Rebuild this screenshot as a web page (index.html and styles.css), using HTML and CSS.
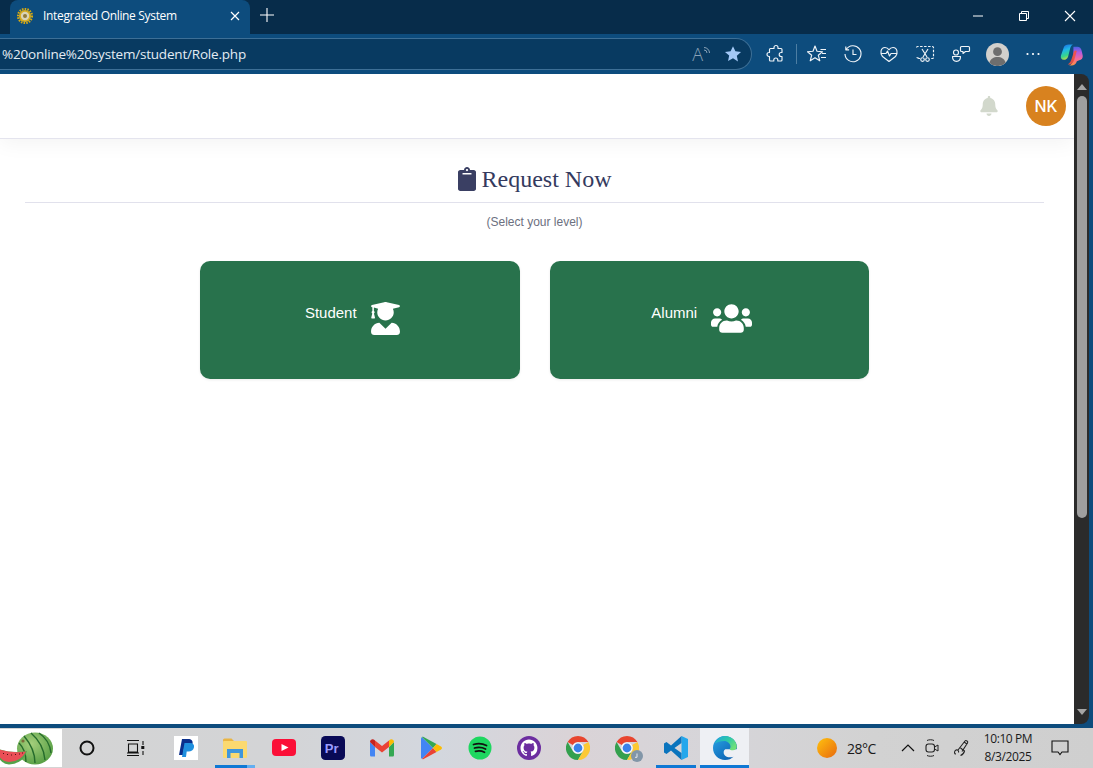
FILE: index.html
```html
<!DOCTYPE html>
<html lang="en">
<head>
<meta charset="utf-8">
<title>Integrated Online System</title>
<link rel="stylesheet" href="styles.css">
</head>
<body>
<div class="tabbar">
  <div class="tab">
    <svg class="favicon" viewBox="0 0 16 16"><circle cx="8" cy="8" r="7" fill="none" stroke="#d6a913" stroke-width="2.2" stroke-dasharray="1.6 1.1"/><circle cx="8" cy="8" r="6" fill="#d8ad20"/><circle cx="8" cy="8" r="4.2" fill="#d9d3b8"/><circle cx="8" cy="8" r="2" fill="#8f7a3c"/></svg>
    <span class="tab-title">Integrated Online System</span>
    <svg class="tab-close" viewBox="0 0 10 10"><path d="M1 1l8 8M9 1l-8 8" stroke="#fff" stroke-width="1.2" fill="none"/></svg>
  </div>
  <svg class="new-tab" viewBox="0 0 14 14"><path d="M7 0v14M0 7h14" stroke="#fff" stroke-width="1.1" fill="none"/></svg>
  <div class="win-controls">
    <svg class="win-btn" viewBox="0 0 46 16"><path d="M18 8h10" stroke="#fff" stroke-width="1"/></svg>
    <svg class="win-btn" viewBox="0 0 46 16"><path d="M18.5 5.5h7v7h-7zM20.5 5.5v-2h7v7h-2" stroke="#fff" stroke-width="1" fill="none"/></svg>
    <svg class="win-btn" viewBox="0 0 46 16"><path d="M18 3l10 10M28 3l-10 10" stroke="#fff" stroke-width="1.1" fill="none"/></svg>
  </div>
</div>

<div class="toolbar">
  <div class="address">
    <span class="url">%20online%20system/student/Role.php</span>
    <span class="read-aloud">A<svg class="waves" viewBox="0 0 8 10"><path d="M1 3.500a3 3 0 0 1 3 3M1 1a5.500 5.500 0 0 1 5.500 5.500" stroke="#8aa3b8" stroke-width="1" fill="none"/></svg></span>
    <svg class="star" viewBox="0 0 24 24"><path d="M12 1.5l3.2 6.9 7.5.9-5.6 5.1 1.5 7.5L12 17.7l-6.6 3.7 1.5-7.5L1.300 9.300l7.500-.9z" fill="#a3c8f7"/></svg>
  </div>
  <div class="tool"><svg viewBox="0 0 20 20"><path d="M8 3.500a2 2 0 0 1 4 0V4.500h3a1 1 0 0 1 1 1v3h-.8a2 2 0 0 0 0 4h.8V16a1 1 0 0 1-1 1h-3.200v-1a2 2 0 0 0-4 0v1H4.500a1 1 0 0 1-1-1v-3.500H3a2 2 0 0 1 0-4h.5v-3a1 1 0 0 1 1-1H8z" class="ln"/></svg></div>
  <span class="tool-sep"></span>
  <div class="tool"><svg viewBox="0 0 20 20"><path d="M8 2l2 5.200 5.500.5-4.200 3.500 1.500 5.600L8 13.800l-4.800 3 1.500-5.600L.5 7.700 6 7.200zM13.500 5.500h5.500M15 9.500h4M14 13.500h5" class="ln"/></svg></div>
  <div class="tool"><svg viewBox="0 0 20 20"><path d="M3.200 5.500A8 8 0 1 1 2 10M2.800 2.500v3.300h3.300M10 5.500V10.500h3.500" class="ln"/></svg></div>
  <div class="tool"><svg viewBox="0 0 20 20"><path d="M3.500 12.500C.8 9.500 1.500 3.500 6 3.500c2 0 3.200 1 4 2.300.8-1.300 2-2.300 4-2.300 4.500 0 5.200 6 2.500 9L10 17.500zM1.500 9.500H7l1.500-2.500 2 5 1.500-2.500h6.500" class="ln"/></svg></div>
  <div class="tool"><svg viewBox="0 0 20 20"><path d="M1.500 3.500a1 1 0 0 1 1-1h15a1 1 0 0 1 1 1v10a1 1 0 0 1-1 1h-2.500M5 14.500H2.500a1 1 0 0 1-1-1z" class="ln dash"/><path d="M7 5l5 8M13 5l-5 8" class="ln"/><circle cx="7.500" cy="15.500" r="1.800" class="ln"/><circle cx="12.500" cy="15.500" r="1.800" class="ln"/></svg></div>
  <div class="tool"><svg viewBox="0 0 20 20"><circle cx="5" cy="8.500" r="2.500" class="ln"/><path d="M1.500 12.500h8c0 3-1.500 4.800-4 4.800s-4-1.800-4-4.800zM9.500 3.500a1 1 0 0 1 1-1h7a1 1 0 0 1 1 1v3a1 1 0 0 1-1 1h-3l-2.500 2V7.500h-1.500a1 1 0 0 1-1-1z" class="ln"/></svg></div>
  <div class="tool"><svg class="profile" viewBox="0 0 24 24"><circle cx="12" cy="12" r="12" fill="#d2d0cc"/><circle cx="12" cy="9" r="4.600" fill="#6e6e6e"/><path d="M3.500 20.500c1-4 4.500-6 8.500-6s7.500 2 8.500 6a12 12 0 0 1-17 0z" fill="#6e6e6e"/></svg></div>
  <div class="tool"><svg viewBox="0 0 20 20"><circle cx="4.500" cy="10" r="1.100" fill="#fff"/><circle cx="10" cy="10" r="1.100" fill="#fff"/><circle cx="15.500" cy="10" r="1.100" fill="#fff"/></svg></div>
  <div class="tool copilot"><svg viewBox="0 0 24 24"><defs><linearGradient id="cpa" x1=".3" y1="0" x2=".6" y2="1"><stop offset="0" stop-color="#1d6fe0"/><stop offset=".35" stop-color="#1fb8e8"/><stop offset=".7" stop-color="#38d68a"/><stop offset="1" stop-color="#e6d93c"/></linearGradient><linearGradient id="cpb" x1=".5" y1="0" x2=".5" y2="1"><stop offset="0" stop-color="#4a63e6"/><stop offset=".3" stop-color="#b45be0"/><stop offset=".65" stop-color="#f56a9a"/><stop offset="1" stop-color="#f9923c"/></linearGradient></defs><path d="M9 1.500h4.500c-1.700.8-2.500 2.500-3 4.500L8.500 14c-.7 2.500-2.500 3.500-4.500 3.500C1.500 17.500.3 15.500 1 13L4 4.500C4.700 2.500 6.500 1.500 9 1.500z" fill="url(#cpa)"/><path d="M14 4h4c2.500 0 4 1.500 4.600 4l1 4.500c.7 3-1 5-3.500 5.500l-2.500 1c-1 3-3 4.500-5.500 4.500H9.500c2.500-.8 3.700-3 4.500-6z" fill="url(#cpb)"/><path d="M14.500 9c.8-1.500 2.500-1.500 3-.5-.8 2-1.500 6-2.500 9-.8 2.500-2.500 4.500-5 5H8c2.500-1.500 3.700-4 4.500-7z" fill="#f4523e" opacity=".9"/></svg></div>
</div>

<div class="viewport">
  <div class="page">
    <header class="site-header">
      <svg class="bell" viewBox="0 0 448 512"><path d="M224 512c35.32 0 63.97-28.65 63.97-64H160.03c0 35.35 28.65 64 63.97 64zm215.39-149.71c-19.32-20.76-55.47-51.99-55.47-154.29 0-77.7-54.48-139.9-127.94-155.16V32c0-17.67-14.32-32-31.98-32s-31.98 14.33-31.98 32v20.84C118.56 68.1 64.08 130.3 64.08 208c0 102.3-36.15 133.53-55.47 154.29-6 6.45-8.66 14.16-8.61 21.71.11 16.4 12.98 32 32.1 32h383.8c19.12 0 32-15.6 32.1-32 .05-7.55-2.61-15.27-8.61-21.71z"/></svg>
      <div class="avatar">NK</div>
    </header>
    <main class="content">
      <h1 class="title">
        <svg class="title-icon" viewBox="0 0 384 512"><path d="M384 112v352c0 26.51-21.49 48-48 48H48c-26.51 0-48-21.49-48-48V112c0-26.51 21.49-48 48-48h80c0-35.29 28.71-64 64-64s64 28.710 64 64h80c26.51 0 48 21.49 48 48zM192 40c-13.255 0-24 10.745-24 24s10.745 24 24 24 24-10.745 24-24-10.745-24-24-24m96 114v-20a6 6 0 0 0-6-6H102a6 6 0 0 0-6 6v20a6 6 0 0 0 6 6h180a6 6 0 0 0 6-6z"/></svg>
        <span>Request Now</span>
      </h1>
      <hr class="rule">
      <p class="subtitle">(Select your level)</p>
      <div class="choices">
        <a class="choice">
          <span class="choice-label">Student</span>
          <svg class="choice-icon grad" viewBox="0 0 448 512"><path d="M319.4 320.6L224 416l-95.4-95.4C57.1 323.7 0 382.2 0 454.4v9.6c0 26.5 21.5 48 48 48h352c26.5 0 48-21.5 48-48v-9.6c0-72.2-57.1-130.7-128.6-133.8zM13.6 79.8l6.4 1.5v58.4c-7 4.2-12 11.5-12 20.3 0 8.4 4.6 15.4 11.1 19.7L3.5 242c-1.7 6.9 2.1 14 7.6 14h41.8c5.5 0 9.3-7.1 7.6-14l-15.6-62.3C51.4 175.4 56 168.4 56 160c0-8.8-5-16.1-12-20.3V87.1l66 15.9c-8.6 17.2-14 36.4-14 57 0 70.7 57.3 128 128 128s128-57.3 128-128c0-20.6-5.3-39.8-14-57l96.3-23.2c18.2-4.4 18.2-27.1 0-31.5l-190.4-46c-13-3.1-26.7-3.1-39.7 0L13.6 48.2c-18.1 4.4-18.1 27.2 0 31.6z"/></svg>
        </a>
        <a class="choice">
          <span class="choice-label">Alumni</span>
          <svg class="choice-icon users" viewBox="0 0 640 512"><path d="M96 224c35.3 0 64-28.7 64-64s-28.7-64-64-64-64 28.7-64 64 28.7 64 64 64zm448 0c35.3 0 64-28.7 64-64s-28.7-64-64-64-64 28.7-64 64 28.7 64 64 64zm32 32h-64c-17.6 0-33.5 7.1-45.1 18.6 40.3 22.1 68.9 62 75.1 109.4h66c17.7 0 32-14.3 32-32v-32c0-35.3-28.7-64-64-64zm-256 0c61.9 0 112-50.1 112-112S381.9 32 320 32 208 82.1 208 144s50.1 112 112 112zm76.8 32h-8.3c-20.8 10-43.9 16-68.5 16s-47.6-6-68.5-16h-8.3C179.6 288 128 339.6 128 403.2V432c0 26.5 21.5 48 48 48h288c26.5 0 48-21.5 48-48v-28.8c0-63.6-51.6-115.2-115.2-115.2zm-223.7-13.4C161.5 263.1 145.6 256 128 256H64c-35.3 0-64 28.7-64 64v32c0 17.7 14.3 32 32 32h65.9c6.3-47.4 34.900-87.3 75.2-109.4z"/></svg>
        </a>
      </div>
    </main>
  </div>
  <div class="scrollbar">
    <span class="arrow-up"></span>
    <span class="thumb"></span>
    <span class="arrow-down"></span>
  </div>
</div>

<footer class="taskbar">
  <div class="thumbnail">
    <svg viewBox="0 0 62 38"><defs><radialGradient id="wm" cx=".4" cy=".35" r=".75"><stop offset="0" stop-color="#a5cf7c"/><stop offset="1" stop-color="#4f9a3f"/></radialGradient></defs><ellipse cx="35" cy="19.500" rx="18" ry="16" fill="url(#wm)"/><path d="M24 7c6 7 11 17 11 27M31 4c7 6 13 15 14 27M39 4c6 4 11 11 12 20M19 14c5 5 7 13 7 19" stroke="#256b2c" stroke-width="1.400" fill="none"/><circle cx="23" cy="12" r="1.600" fill="#7d6a3a"/><path d="M-4 19Q11 25 27 22Q23 35 9 35.500Q-2 35 -4 19z" fill="#54a24a"/><path d="M-4 19.500Q11 25 26 22.500Q21 32.500 9 33Q-1 32.500 -4 19.500z" fill="#ea4f56"/><path d="M3 24.500h1M7 25.500h1M11 26h1M15 25.500h1M19 25h1M22 24h1" stroke="#4a1616" stroke-width="1.200"/></svg>
  </div>
  <div class="task"><svg class="i20" viewBox="0 0 20 20"><circle cx="10" cy="10" r="6.500" fill="none" stroke="#111" stroke-width="2"/></svg></div>
  <div class="task"><svg class="i20 taskview" viewBox="0 0 20 20"><path d="M2 2.500h12M2 17.500h12M3.500 6h9v8h-9zM2 15h12M18 3v4M18 13v4" stroke="#111" stroke-width="1.100" fill="none"/><rect x="16.300" y="8" width="3" height="3" fill="#111"/></svg></div>
  <div class="task paypal-slot"><svg class="i24" viewBox="0 0 24 24"><rect width="24" height="24" fill="#fff"/><path d="M8 3h6c3.500 0 5 2 4.500 4.500C18 11 15.500 12.500 12.500 12.500H10L9 19H5z" fill="#0a2f8c"/><path d="M10.500 7h5.500c3 0 4.500 1.800 4 4.200-.6 3-2.800 4.300-5.500 4.300h-1.800L12 21H8z" fill="#1f8fde"/></svg></div>
  <div class="task running"><svg class="i24" viewBox="0 0 24 24"><path d="M0 4a1.500 1.500 0 0 1 1.500-1.500h7L11 5h12v2H0z" fill="#eab543"/><rect y="5" width="24" height="17" rx="1" fill="#fbd970"/><path d="M4 22v-9h16v9h-3.500v-5h-9v5z" fill="#3f96dc"/></svg></div>
  <div class="task"><svg class="i24 wide" viewBox="0 0 24 18"><rect width="24" height="17" rx="4" fill="#fb0f37"/><path d="M9.500 5l7 3.500-7 3.500z" fill="#fff"/></svg></div>
  <div class="task"><svg class="i24" viewBox="0 0 22 22"><rect width="22" height="22" rx="4" fill="#090a56"/><text class="pr-text" x="3.500" y="15.500">Pr</text></svg></div>
  <div class="task"><svg class="i24" viewBox="0 0 24 18"><path d="M0 3v13c0 1 .6 1.600 1.500 1.600h3.500V8z" fill="#4285f4"/><path d="M19 17.600h3.500c.9 0 1.500-.6 1.500-1.600V3l-5 5z" fill="#34a853"/><path d="M19 8l5-5c0-2.500-2.800-3.500-4.500-2L19 1.500z" fill="#fbbc04"/><path d="M5 8V1.500L12 7l7-5.500V8l-7 5.500z" fill="#ea4335"/><path d="M0 3l5 5V1.500L4.500 1C2.800-.5 0 .5 0 3z" fill="#c5221f"/></svg></div>
  <div class="task"><svg class="i24" viewBox="0 0 24 24"><path d="M3 1l11 11L3 23c-.600-.3-1-.9-1-1.700V2.700C2 1.900 2.400 1.300 3 1z" fill="#4285f4"/><path d="M3 1c.500-.2 1-.200 1.600.100L17.500 8 14 12z" fill="#34a853"/><path d="M3 23c.500.200 1 .200 1.600-.100L17.500 16 14 12z" fill="#ea4335"/><path d="M17.500 8l4.500 2.500c1.300.8 1.300 2.200 0 3L17.500 16 14 12z" fill="#fbbc04"/></svg></div>
  <div class="task"><svg class="i24" viewBox="0 0 24 24"><circle cx="12" cy="12" r="11.500" fill="#1ed760"/><path d="M5.500 8.500c4.500-1.300 9-1 13 1M6.500 12c3.800-1 7.500-.8 11 1M7.500 15.300c3-.7 6-.6 9 .9" stroke="#111" stroke-width="1.800" stroke-linecap="round" fill="none"/></svg></div>
  <div class="task"><svg class="i24" viewBox="0 0 24 24"><circle cx="12" cy="12" r="12" fill="#6c2da0"/><g transform="translate(3.500 3.500) scale(1.060)"><path fill="#fff" d="M8 0C3.580 0 0 3.580 0 8c0 3.540 2.290 6.530 5.470 7.590.4.070.55-.17.55-.38 0-.19-.01-.82-.01-1.490-2.010.37-2.530-.49-2.690-.94-.09-.23-.48-.94-.82-1.130-.28-.15-.68-.52-.01-.53.63-.01 1.080.58 1.230.82.72 1.210 1.870.87 2.330.66.07-.52.28-.87.51-1.070-1.780-.2-3.640-.89-3.640-3.950 0-.87.31-1.590.82-2.150-.08-.2-.36-1.020.08-2.120 0 0 .67-.21 2.200.82.64-.18 1.320-.27 2-.27.68 0 1.360.09 2 .27 1.530-1.040 2.200-.82 2.200-.82.44 1.100.16 1.920.08 2.120.51.56.82 1.270.82 2.150 0 3.070-1.870 3.750-3.650 3.950.29.25.54.73.54 1.480 0 1.070-.01 1.930-.01 2.200 0 .21.15.46.55.38A8.013 8.013 0 0016 8c0-4.420-3.580-8-8-8z"/></g></svg></div>
  <div class="task"><svg class="i24" viewBox="0 0 24 24"><path d="M1.600 6A12 12 0 0 0 12 24l5.200-9a6 6 0 0 1-10.400 0z" fill="#34a04e"/><path d="M22.400 6A12 12 0 0 1 12 24l5.200-9a6 6 0 0 0 0-6z" fill="#fcc934"/><path d="M12 0a12 12 0 0 1 10.400 6H12a6 6 0 0 0-5.200 3L1.600 6A12 12 0 0 1 12 0z" fill="#e8452f"/><circle cx="12" cy="12" r="5.600" fill="#fff"/><circle cx="12" cy="12" r="4.400" fill="#3b82ea"/></svg></div>
  <div class="task"><span class="badge-wrap"><svg class="i24" viewBox="0 0 24 24"><path d="M1.600 6A12 12 0 0 0 12 24l5.200-9a6 6 0 0 1-10.400 0z" fill="#34a04e"/><path d="M22.400 6A12 12 0 0 1 12 24l5.200-9a6 6 0 0 0 0-6z" fill="#fcc934"/><path d="M12 0a12 12 0 0 1 10.400 6H12a6 6 0 0 0-5.200 3L1.600 6A12 12 0 0 1 12 0z" fill="#e8452f"/><circle cx="12" cy="12" r="5.600" fill="#fff"/><circle cx="12" cy="12" r="4.400" fill="#3b82ea"/></svg><svg class="badge" viewBox="0 0 12 12"><circle cx="6" cy="6" r="6" fill="#8296a8"/><path d="M6 3.500v3.800H4" stroke="#e4e8ec" stroke-width="1" fill="none"/></svg></span></div>
  <div class="task running solid"><svg class="i24" viewBox="0 0 24 24"><path d="M17.500 0L24 3v18l-6.500 3V0z" fill="#23a7ec"/><path d="M17.500 0L7 9.500 2.500 6 0 7.500V16.500L2.500 18 7 14.500 17.500 24V17L10.500 12 17.500 7z" fill="#0a74bd"/></svg></div>
  <div class="task active"><svg class="i24 edge" viewBox="0 0 24 24"><defs><linearGradient id="eda" x1="0" y1="0" x2="1" y2=".6"><stop offset="0" stop-color="#1fa3e0"/><stop offset=".55" stop-color="#2bc9a8"/><stop offset="1" stop-color="#6fe07a"/></linearGradient><linearGradient id="edb" x1="0" y1="0" x2=".8" y2="1"><stop offset="0" stop-color="#2aa4e6"/><stop offset="1" stop-color="#0a5fb0"/></linearGradient></defs><path d="M12 0C5.400 0 0 5.400 0 12c0 6.600 5.400 12 12 12 3.500 0 6.500-1.300 8.500-3.300-3.500 1.300-7.500.5-9-1.700-1.400-2-1-4.700.8-5.800h11.300c.3-.6.400-1.300.4-2.200C23.800 5 18.500 0 12 0z" fill="url(#edb)"/><path d="M2 7c2-4.500 6-7 10-7 6.500 0 11.800 5 11.800 11 0 2-1.500 3.200-4 3.200-2 0-3-.3-3-1.200 0-.5.700-1 .7-2.500 0-3-3-5.500-6.500-5.500-3.500 0-6.500 1-9 2.500z" fill="url(#eda)"/></svg></div>
  <div class="tray">
    <svg class="sun" viewBox="0 0 20 20"><defs><linearGradient id="sn" x1="0" y1="0" x2="1" y2="1"><stop offset="0" stop-color="#ffc20e"/><stop offset="1" stop-color="#e8690f"/></linearGradient></defs><circle cx="10" cy="10" r="10" fill="url(#sn)"/></svg>
    <span class="temp">28°C</span>
    <svg class="chevron" viewBox="0 0 14 8"><path d="M1 7l6-6 6 6" stroke="#111" stroke-width="1.200" fill="none"/></svg>
    <svg class="tray-ic meet" viewBox="0 0 14 18"><path d="M2 1.500c2-1 5-1 7 0M2 16.500c2 1 5 1 7 0" stroke="#222" stroke-width="1" fill="none"/><rect x="1" y="5" width="8.500" height="8" rx="2.500" fill="none" stroke="#222" stroke-width="1.100"/><path d="M9.500 8l3.500-2v6l-3.500-2z" fill="none" stroke="#222" stroke-width="1"/></svg>
    <svg class="tray-ic pen" viewBox="0 0 18 18"><path d="M3 15c-2 0-2-3 0-4 2-.5 3 1 2.500 2.500M5 11l7-9c1-1.200 3.500.5 2.500 2L9 12.500M7.500 9l4 3c-.5 2-2.500 4-4 4.500M11 3l3 2" stroke="#222" stroke-width="1.100" fill="none"/></svg>
    <div class="clock"><span>10:10 PM</span><span>8/3/2025</span></div>
    <svg class="notify" viewBox="0 0 18 16"><path d="M1 1h16v11h-6l-2 2.500L7 12H1z" stroke="#111" stroke-width="1.100" fill="none"/></svg>
  </div>
</footer>
</body>
</html>
```
FILE: styles.css
```css
* { box-sizing: border-box; }
html, body { height: 100%; }
body {
  margin: 0;
  width: 1093px;
  height: 768px;
  overflow: hidden;
  display: flex;
  flex-direction: column;
  font-family: "Open Sans", "Liberation Sans", sans-serif;
  background: #0d4c7d;
}

/* browser tab strip */
.tabbar {
  height: 34px;
  flex: none;
  background: #072c4a;
  display: flex;
  align-items: stretch;
  padding-left: 10px;
}
.tab {
  width: 240px;
  background: #0d4c7d;
  border-radius: 8px 8px 0 0;
  display: flex;
  align-items: center;
  color: #fff;
  font-size: 12px;
  padding: 0 10px 3px 7px;
}
.favicon { width: 16px; height: 16px; flex: none; }
.tab-title { margin-left: 10px; flex: 1; white-space: nowrap; letter-spacing: -.33px; }
.tab-close { width: 10px; height: 10px; flex: none; }
.new-tab { width: 14px; height: 14px; margin: 8px 0 0 10px; }
.win-controls { margin-left: auto; display: flex; align-items: flex-start; padding: 8px 0 0 0; }
.win-btn { width: 46px; height: 16px; }

/* browser toolbar */
.toolbar {
  height: 40px;
  flex: none;
  background: #0d4c7d;
  display: flex;
  align-items: center;
  position: relative;
}
.address {
  width: 752px;
  height: 32px;
  flex: none;
  margin-right: 6px;
  background: #083a61;
  border: 1px solid #3d6f96;
  border-left: 0;
  border-radius: 0 16px 16px 0;
  display: flex;
  align-items: center;
  overflow: hidden;
  padding-right: 9px;
}
.url { color: #e4ecf3; font-size: 13.5px; white-space: nowrap; margin-left: 2px; flex: 1; letter-spacing: -.2px; }
.read-aloud { color: #8aa3b8; font-size: 18px; font-weight: 300; display: flex; align-items: flex-start; margin-right: 13px; line-height: 1; }
.waves { width: 8px; height: 11px; margin-top: 1px; }
.star { width: 18px; height: 18px; flex: none; }
.tool { width: 36px; height: 36px; flex: none; display: flex; align-items: center; justify-content: center; }
.tool svg { width: 20px; height: 20px; }
.tool .profile { width: 23px; height: 23px; }
.tool.copilot { width: 40px; }
.tool.copilot svg { width: 23px; height: 23px; }
.tool-sep { width: 1px; height: 20px; margin: 0 2px; background: #4d7ea3; flex: none; }
.ln { fill: none; stroke: #f0f4f8; stroke-width: 1.150; stroke-linejoin: round; }
.dash { stroke-dasharray: 2.500 1.500; }

/* viewport */
.viewport { height: 650px; flex: none; display: flex; }
.page { width: 1074px; background: #fff; display: flex; flex-direction: column; }
.site-header {
  height: 65px;
  flex: none;
  background: #fff;
  border-bottom: 1px solid #e4e4ee;
  box-shadow: 0 4px 20px rgba(0, 0, 0, .05);
  display: flex;
  align-items: center;
  justify-content: flex-end;
  padding: 0 8px 0 0;
}
.bell { width: 18px; height: 20px; fill: #d2d8cc; margin-right: 28px; margin-bottom: 1px; }
.avatar {
  width: 40px;
  height: 40px;
  border-radius: 50%;
  background: #d8821f;
  color: #fff;
  font-family: Inter, "Liberation Sans", sans-serif;
  font-size: 16px;
  font-weight: 500;
  display: flex;
  align-items: center;
  justify-content: center;
}
.content { padding: 26px 30px 0 25px; }
.title {
  margin: 0;
  font-family: "Liberation Serif", serif;
  font-weight: 400;
  font-size: 24px;
  line-height: 28px;
  color: #343a5e;
  display: flex;
  align-items: center;
  justify-content: center;
  gap: 6px;
}
.title-icon { width: 18px; height: 24px; fill: #3a3f63; }
.rule { border: 0; border-top: 1px solid #e1e1ec; margin: 9px 0 0; }
.subtitle {
  margin: 12px 0 0;
  font-family: "Liberation Sans", sans-serif;
  font-size: 12px;
  line-height: 14px;
  color: #6c7080;
  text-align: center;
}
.choices {
  width: 669px;
  margin: 32px auto 0;
  display: grid;
  grid-template-columns: 1fr 1fr;
  gap: 30px;
}
.choice {
  height: 118px;
  border-radius: 10px;
  background: #28724c;
  color: #fff;
  font-family: "Liberation Sans", sans-serif;
  font-size: 15px;
  display: flex;
  align-items: center;
  justify-content: center;
  gap: 14px;
  padding-right: 15px;
  box-shadow: 0 1px 3px rgba(0, 0, 0, .08);
}
.choice-label { margin-bottom: 16px; }
.choice-icon { fill: #fff; flex: none; margin-bottom: 4px; }
.grad { width: 29px; height: 33px; }
.users { width: 41px; height: 33px; }

/* scrollbar */
.scrollbar {
  width: 15px;
  margin-right: 4px;
  background: #2b2b2b;
  border-radius: 0 8px 8px 0;
  display: flex;
  flex-direction: column;
  align-items: center;
  padding: 10px 0 9px;
}
.thumb { width: 10px; height: 422px; margin-top: 6px; background: #9f9f9f; border-radius: 5px; }
.arrow-up, .arrow-down { width: 0; height: 0; border-left: 5px solid transparent; border-right: 5px solid transparent; }
.arrow-up { border-bottom: 6px solid #a5a5a5; }
.arrow-down { border-top: 6px solid #a5a5a5; margin-top: auto; }

/* windows taskbar */
.taskbar {
  height: 44px;
  flex: none;
  border-top: 4px solid #0d4c7d;
  background: linear-gradient(90deg, #d4d4d4 0, #d3d4d6 25%, #d3d7de 40%, #dad3d7 52%, #d6d5d9 65%, #d2d2d2 80%, #cfcfcf 100%);
  display: flex;
  align-items: stretch;
}
.thumbnail { width: 62px; flex: none; background: #fff; display: flex; margin: 1px 0.5px 1px 0; overflow: hidden; }
.thumbnail svg { width: 62px; height: 38px; }
.task { width: 49px; flex: none; display: flex; align-items: center; justify-content: center; position: relative; }
.paypal-slot { margin-left: 0.5px; }
.i20 { width: 20px; height: 20px; }
.taskview { margin-right: 2px; }
.i24 { width: 24px; height: 24px; }
.i24.wide { width: 24px; height: 18px; }
.running::after, .active::after {
  content: "";
  position: absolute;
  bottom: 0;
  height: 3px;
  background: #0f78d4;
}
.running::after { left: 4.500px; right: 4.500px; background: linear-gradient(90deg, #0f78d4 80%, #63aef0 80%); }
.running.solid::after { background: #0f78d4; }
.active { background: #eef0f4; }
.active::after { left: 0; right: 0; }
.pr-text { font-family: "Liberation Sans", sans-serif; font-size: 12px; font-weight: 700; fill: #9b9bff; }
.badge-wrap { display: block; position: relative; width: 24px; height: 24px; }
.badge { position: absolute; right: -4px; bottom: -2px; width: 12px; height: 12px; }
.tray {
  flex: 1;
  display: flex;
  align-items: center;
  font-size: 14px;
  color: #1a1a1a;
  padding-left: 68px;
}
.sun { width: 20px; height: 20px; flex: none; }
.temp { margin-left: 10px; width: 32px; font-size: 14px; white-space: nowrap; letter-spacing: -.5px; }
.chevron { width: 14px; height: 8px; margin-left: 22px; }
.tray-ic.meet { width: 14px; height: 18px; margin-left: 10px; }
.tray-ic.pen { width: 18px; height: 18px; margin-left: 14px; }
.clock {
  width: 60px;
  margin-left: 7px;
  font-size: 12px;
  line-height: 18px;
  display: flex;
  flex-direction: column;
  align-items: center;
  letter-spacing: -.4px;
  white-space: nowrap;
}
.notify { width: 18px; height: 16px; margin-left: 13px; }
```
